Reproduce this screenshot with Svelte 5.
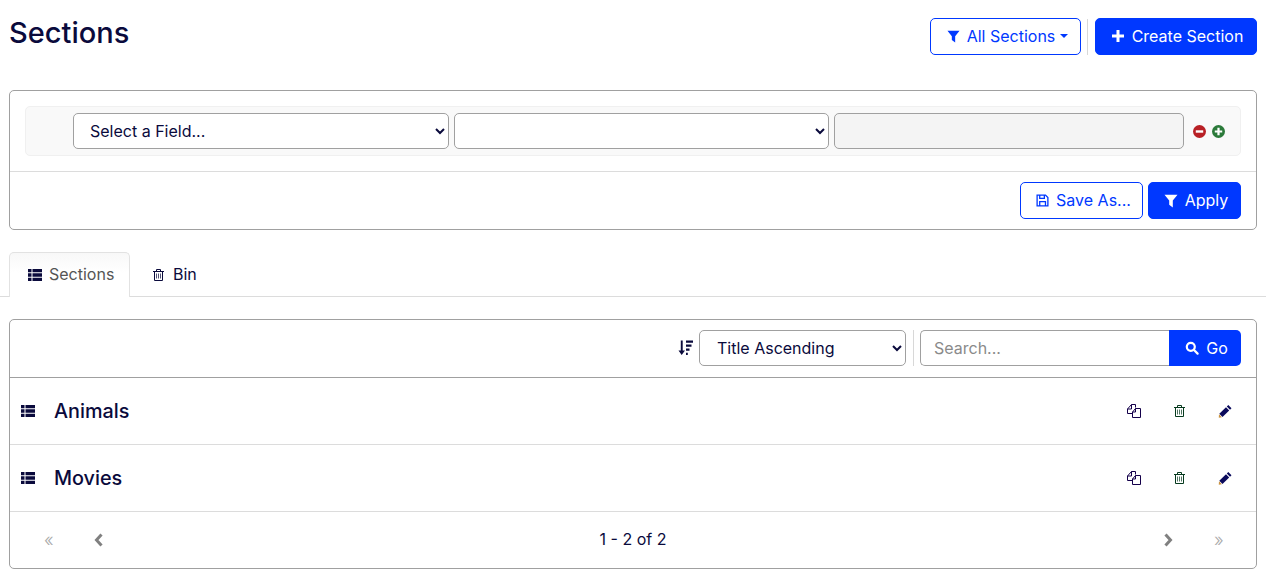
<script>
  let sections = ["Animals", "Movies"];
</script>

{#snippet filterIcon()}
  <svg class="icon funnel" viewBox="0 0 14 14"><path d="M.5 .8h13L8.800 6.600V13.500L5.200 10.800V6.600z" fill="currentColor" /></svg>
{/snippet}

{#snippet listIcon()}
  <svg class="icon" viewBox="0 0 14 14" fill="currentColor">
    <path d="M0 1h3.500v3.300H0zM4.500 1H14v3.300H4.500zM0 5.300h3.500v3.400H0zM4.500 5.300H14v3.400H4.500zM0 9.700h3.500V13H0zM4.500 9.700H14V13H4.500z" />
  </svg>
{/snippet}

{#snippet trashIcon()}
  <svg class="icon" viewBox="0 0 14 14" fill="none" stroke="currentColor">
    <path d="M2 3.500h11M5.500 3V1.500h4V3M3.500 3.500v9h8v-9" />
    <path d="M5.500 5.500v5M7.500 5.500v5M9.500 5.500v5" stroke-opacity=".7" />
  </svg>
{/snippet}

{#snippet copyIcon()}
  <svg class="icon" viewBox="0 0 14 14" fill="none" stroke="currentColor">
    <path d="M5 9.500H.5V5L4.500 .5h4V3.500" />
    <path d="M4.500 .5V5H.5" />
    <path d="M5.500 8L8.500 4.500h5v9h-8z" />
    <path d="M8.500 4.500V8h-3" />
  </svg>
{/snippet}

{#snippet pencilIcon()}
  <svg class="icon" viewBox="0 0 14 14">
    <path d="M10.300 1l3.200 3.200-1.500 1.500-3.200-3.200zM8 3.300l3.200 3.200-6.700 6.500-3.200-3.200z" fill="currentColor" />
    <path d="M1 10.300l2.900 2.900-3.100.6z" fill="#c9923f" />
  </svg>
{/snippet}

<div class="page">
  <header class="top">
    <h1>Sections</h1>
    <div class="top-actions">
      <button class="btn outline filter-btn">
        {@render filterIcon()}
        <span>All Sections</span>
        <i class="caret"></i>
      </button>
      <span class="vline"></span>
      <button class="btn solid create-btn">
        <svg class="icon" viewBox="0 0 14 14"><path d="M5.500 1h3v4.500H13v3H8.500V13h-3V8.500H1v-3h4.500z" fill="currentColor" /></svg>
        <span>Create Section</span>
      </button>
    </div>
  </header>

  <section class="panel filter-panel">
    <div class="filter-row-wrap">
      <div class="filter-row">
        <select class="field"><option>Select a Field...</option></select>
        <select class="field op"><option></option></select>
        <input class="value" disabled />
        <div class="row-tools">
          <svg class="tool" viewBox="0 0 14 14"><circle cx="7" cy="7" r="7" fill="#b82025" /><path d="M3 5.700h8v2.600H3z" fill="#fff" /></svg>
          <svg class="tool" viewBox="0 0 14 14"><circle cx="7" cy="7" r="7" fill="#2b7a3a" /><path d="M5.800 3h2.400v2.800H11v2.400H8.200V11H5.800V8.200H3V5.800h2.800z" fill="#fff" /></svg>
        </div>
      </div>
    </div>
    <div class="filter-foot">
      <button class="btn outline save-btn">
        <svg class="icon" viewBox="0 0 14 14" fill="none" stroke="currentColor" stroke-width="1.400">
          <path d="M1.200 1.200h9l2.600 2.600v9H1.200z" />
          <path d="M4 1.200v3.600h5V1.200M4 12.800V8.300h6.200v4.500" />
        </svg>
        <span>Save As...</span>
      </button>
      <button class="btn solid apply-btn">
        {@render filterIcon()}
        <span>Apply</span>
      </button>
    </div>
  </section>

  <nav class="tabs">
    <a class="tab active" href="#sections">{@render listIcon()}<span>Sections</span></a>
    <a class="tab" href="#bin">{@render trashIcon()}<span>Bin</span></a>
  </nav>

  <section class="panel list-panel">
    <div class="toolbar">
      <svg class="sort" viewBox="0 0 15 15" fill="currentColor">
        <path d="M2.800 .5h1.900v10H7L3.700 15 .5 10.500h2.300zM8 .5h7v2.200H8zM8 4.500h5.500v2.200H8zM8 8.500h3.500v2.200H8zM8 12.800h1.800V15H8z" />
      </svg>
      <select class="sort-select"><option>Title Ascending</option></select>
      <span class="vline short"></span>
      <div class="search">
        <input placeholder="Search..." />
        <button class="go">
          <svg class="icon" viewBox="0 0 14 14" fill="none" stroke="currentColor" stroke-width="2.200">
            <circle cx="5.800" cy="5.800" r="4" />
            <path d="M8.800 8.800l3.800 3.800" stroke-linecap="round" />
          </svg>
          <span>Go</span>
        </button>
      </div>
    </div>

    {#each sections as name}
      <div class="row">
        <span class="row-icon">{@render listIcon()}</span>
        <span class="row-name">{name}</span>
        <div class="row-actions">
          <a class="copy" href="#copy">{@render copyIcon()}</a>
          <a class="del" href="#delete">{@render trashIcon()}</a>
          <a class="edit" href="#edit">{@render pencilIcon()}</a>
        </div>
      </div>
    {/each}

    <div class="pager">
      <div class="pager-side">
        <span class="dbl">«</span>
        <svg class="chev" viewBox="0 0 10 14"><path d="M7.500 1.500L2.500 7l5 5.500" fill="none" stroke="currentColor" stroke-width="3" /></svg>
      </div>
      <span class="count">1 - 2 of 2</span>
      <div class="pager-side right">
        <svg class="chev" viewBox="0 0 10 14"><path d="M2.500 1.500l5 5.500-5 5.500" fill="none" stroke="currentColor" stroke-width="3" /></svg>
        <span class="dbl">»</span>
      </div>
    </div>
  </section>
</div>

<style>
  :global(body) {
    background: #fff;
    color: #0a0a3c;
    font-family: Inter, "Liberation Sans", sans-serif;
    font-size: 16px;
  }

  .page {
    height: 577px;
    box-sizing: border-box;
    padding: 0 9px;
    overflow: hidden;
  }

  .icon {
    width: 14px;
    height: 14px;
    flex: none;
  }

  .top {
    display: flex;
    justify-content: space-between;
    align-items: flex-start;
    height: 90px;
  }

  h1 {
    margin: 15px 0 0;
    font-size: 29px;
    font-weight: 500;
    line-height: 36px;
  }

  .top-actions {
    display: flex;
    align-items: center;
    margin-top: 18px;
  }

  .vline {
    width: 1px;
    height: 36px;
    background: #d8d8d8;
    margin: 0 7px 0 6px;
  }

  .btn {
    display: inline-flex;
    align-items: center;
    justify-content: center;
    gap: 9px;
    height: 37px;
    box-sizing: border-box;
    border-radius: 5px;
    font: inherit;
    padding: 0 0 2px;
  }

  .btn .icon {
    margin-top: 2px;
  }

  .outline {
    background: #fff;
    border: 1px solid #0038ff;
    color: #0038ff;
  }

  .solid {
    background: #0038ff;
    border: 1px solid #0038ff;
    color: #fff;
  }

  .filter-btn {
    width: 151px;
    gap: 8px;
    padding-left: 4px;
  }

  .filter-btn .icon {
    width: 13px;
    height: 13px;
    margin-right: -1px;
  }

  .create-btn {
    width: 162px;
    gap: 7px;
    padding-left: 2px;
  }

  .create-btn .icon {
    margin-top: 1px;
  }

  .save-btn {
    width: 123px;
    gap: 8px;
    padding-left: 4px;
  }

  .save-btn .icon {
    width: 13px;
    height: 13px;
    margin-right: -1px;
  }

  .apply-btn {
    width: 93px;
    gap: 7px;
    padding-left: 3px;
  }

  .caret {
    width: 0;
    height: 0;
    margin-left: -3px;
    border-left: 4px solid transparent;
    border-right: 4px solid transparent;
    border-top: 4px solid currentColor;
  }

  .panel {
    border: 1px solid #a0a0a0;
    border-radius: 5px;
    box-sizing: border-box;
  }

  .filter-panel {
    height: 140px;
  }

  .filter-row-wrap {
    padding: 15px;
    border-bottom: 1px solid #dcdcdc;
  }

  .filter-row {
    display: flex;
    align-items: center;
    height: 50px;
    box-sizing: border-box;
    padding-left: 47px;
    background: #f9f9f9;
    border: 1px solid #f0f0f0;
    border-radius: 5px;
  }

  select, input {
    font: inherit;
    color: inherit;
    box-sizing: border-box;
    height: 36px;
    border: 1px solid #a0a0a0;
    border-radius: 5px;
    background-color: #fff;
  }

  .field {
    width: 376px;
    padding: 0 12px;
    margin-right: 5px;
  }

  .field.op {
    width: 375px;
  }

  .value {
    width: 350px;
    background: #f4f4f4;
  }

  .row-tools {
    display: flex;
    gap: 6px;
    margin-left: 9px;
  }

  .tool {
    width: 13px;
    height: 13px;
  }

  .filter-foot {
    display: flex;
    justify-content: flex-end;
    gap: 5px;
    padding: 10px 15px 0 0;
  }

  .tabs {
    display: flex;
    height: 45px;
    margin: 22px -9px;
    padding-left: 9px;
    border-bottom: 1px solid #dcdcdc;
    box-sizing: border-box;
  }

  .tab {
    display: flex;
    align-items: center;
    gap: 7px;
    height: 45px;
    box-sizing: border-box;
    padding: 0 17px 2px 18px;
    color: inherit;
    text-decoration: none;
    border: 1px solid transparent;
    border-bottom: none;
    border-radius: 5px 5px 0 0;
  }

  .tab .icon {
    margin-top: 1px;
  }

  .tab.active {
    width: 121px;
    color: #555;
    background: linear-gradient(#f8f8f8, #fff 45%);
    border-color: #e2e2e2;
  }

  .tab.active .icon {
    color: #0a0a3c;
  }

  .tab:not(.active) {
    padding-left: 20px;
    gap: 8px;
  }

  .list-panel {
    height: 250px;
  }

  .toolbar {
    display: flex;
    align-items: center;
    justify-content: flex-end;
    height: 58px;
    box-sizing: border-box;
    padding: 0 15px 2px 0;
    border-bottom: 1px solid #a0a0a0;
  }

  .sort {
    width: 15px;
    height: 15px;
    margin-right: 6px;
  }

  .sort-select {
    width: 207px;
    padding: 0 13px;
  }

  .vline.short {
    margin: 0 6px 0 7px;
  }

  .search {
    display: flex;
  }

  .search input {
    width: 249px;
    padding: 0 13px;
    border-right: none;
    border-radius: 5px 0 0 5px;
  }

  .search input::placeholder {
    color: #8a8a8a;
  }

  .go {
    display: flex;
    align-items: center;
    justify-content: center;
    gap: 7px;
    width: 72px;
    height: 36px;
    border: none;
    border-radius: 0 5px 5px 0;
    background: #0038ff;
    color: #fff;
    font: inherit;
    padding: 0 0 0 3px;
  }

  .row {
    display: flex;
    align-items: center;
    height: 67px;
    box-sizing: border-box;
    border-bottom: 1px solid #dcdcdc;
    padding-left: 11px;
  }

  .row-icon {
    display: flex;
    width: 33px;
    margin-top: -1px;
  }

  .row-name {
    font-size: 19.8px;
    font-weight: 500;
  }

  .row-actions {
    display: flex;
    margin-left: auto;
    padding-right: 24px;
    gap: 32px;
  }

  .row-actions a {
    display: flex;
  }

  .copy { color: #14004a; margin-right: -1px; }
  .del { color: #063a1e; }
  .edit { color: #0a0a5c; }

  .pager {
    display: flex;
    align-items: center;
    justify-content: space-between;
    height: 54px;
    padding: 0 33px;
  }

  .pager-side {
    display: flex;
    align-items: center;
    gap: 39px;
    width: 62px;
    margin-left: 1px;
    color: #808080;
  }

  .pager-side.right {
    justify-content: flex-end;
    margin-left: 0;
    gap: 41px;
  }

  .pager-side.right .dbl {
    margin-right: -2px;
  }

  .dbl {
    font-size: 18px;
    font-weight: 300;
    color: #aaa;
    width: 11px;
  }

  .chev {
    width: 10px;
    height: 14px;
    margin-top: 2px;
  }

  .count {
    font-size: 16px;
    margin-left: -1px;
  }
</style>
